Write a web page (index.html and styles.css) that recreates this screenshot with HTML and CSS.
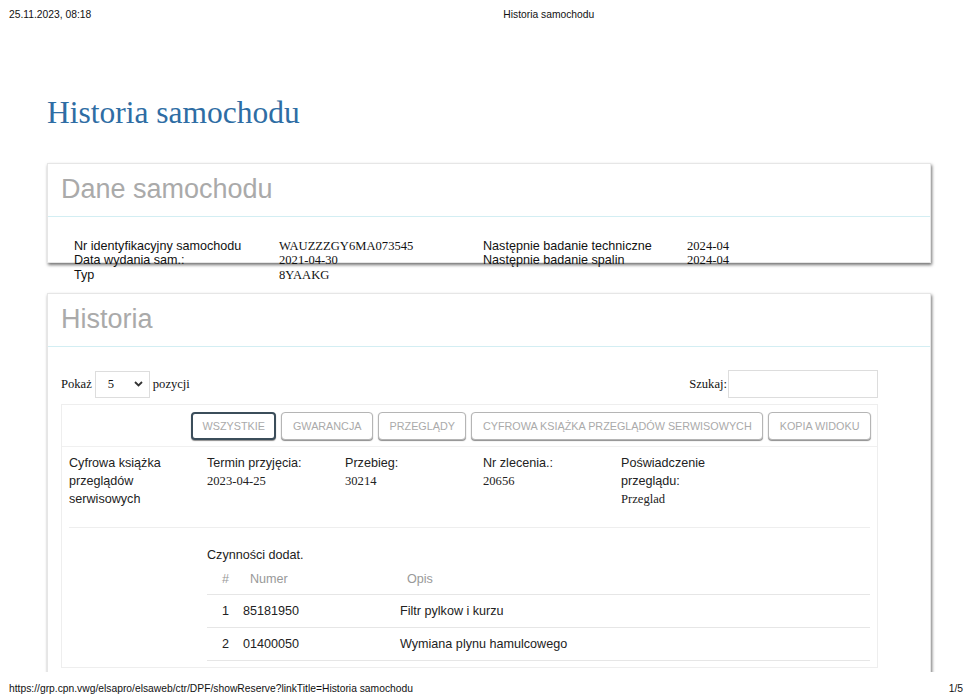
FILE: index.html
```html
<!DOCTYPE html>
<html lang="pl">
<head>
    <meta charset="UTF-8">
    <title>Historia samochodu</title>
    <link rel="stylesheet" href="styles.css">
</head>
<body>
    <header class="print-header">
        <span>25.11.2023, 08:18</span>
        <span class="print-title">Historia samochodu</span>
    </header>

    <main class="page">
        <h1 class="page-title">Historia samochodu</h1>

        <section class="panel panel-car">
            <div class="panel-heading">Dane samochodu</div>
            <div class="car-data">
                <span class="lbl">Nr identyfikacyjny samochodu</span>
                <span class="val">WAUZZZGY6MA073545</span>
                <span class="lbl">Następnie badanie techniczne</span>
                <span class="val">2024-04</span>

                <span class="lbl">Data wydania sam.:</span>
                <span class="val">2021-04-30</span>
                <span class="lbl">Następnie badanie spalin</span>
                <span class="val">2024-04</span>

                <span class="lbl">Typ</span>
                <span class="val">8YAAKG</span>
            </div>
        </section>

        <section class="panel panel-history">
            <div class="panel-heading">Historia</div>
            <div class="panel-body">
                <div class="controls">
                    <div class="length">
                        Pokaż
                        <div class="fake-select">
                            <span>5</span>
                            <svg width="9" height="6" viewBox="0 0 9 6"><path d="M1 1 L4.5 4.5 L8 1" fill="none" stroke="#333" stroke-width="1.8"/></svg>
                        </div>
                        pozycji
                    </div>
                    <label class="search">Szukaj:<input type="text"></label>
                </div>

                <div class="records">
                    <div class="filters">
                        <button class="btn active">Wszystkie</button>
                        <button class="btn">Gwarancja</button>
                        <button class="btn">Przeglądy</button>
                        <button class="btn">Cyfrowa książka przeglądów serwisowych</button>
                        <button class="btn">Kopia widoku</button>
                    </div>

                    <div class="record">
                        <div class="cell">Cyfrowa książka przeglądów serwisowych</div>
                        <div class="cell">Termin przyjęcia:<div class="val">2023-04-25</div></div>
                        <div class="cell">Przebieg:<div class="val">30214</div></div>
                        <div class="cell">Nr zlecenia.:<div class="val">20656</div></div>
                        <div class="cell">Poświadczenie przeglądu:<div class="val">Przeglad</div></div>
                    </div>

                    <div class="details">
                        <div class="details-title">Czynności dodat.</div>
                        <table class="ops">
                            <colgroup>
                                <col style="width: 29px">
                                <col style="width: 157px">
                                <col>
                            </colgroup>
                            <thead>
                                <tr><th>#</th><th>Numer</th><th>Opis</th></tr>
                            </thead>
                            <tbody>
                                <tr><td>1</td><td>85181950</td><td>Filtr pylkow i kurzu</td></tr>
                                <tr><td>2</td><td>01400050</td><td>Wymiana plynu hamulcowego</td></tr>
                            </tbody>
                        </table>
                    </div>
                </div>
            </div>
        </section>
    </main>

    <footer class="print-footer">
        <span>https://grp.cpn.vwg/elsapro/elsaweb/ctr/DPF/showReserve?linkTitle=Historia samochodu</span>
        <span>1/5</span>
    </footer>
</body>
</html>
```

FILE: styles.css
```css
* {
    box-sizing: border-box;
}

body {
    margin: 0;
    height: 698px;
    display: flex;
    flex-direction: column;
    overflow: hidden;
    background: #fff;
    color: #222;
    font-family: "Liberation Sans", Arial, sans-serif;
    font-size: 12.6px;
    line-height: 18px;
}

.print-header,
.print-footer {
    display: flex;
    font-size: 10.3px;
    line-height: 12px;
    color: #111;
    padding: 0 15px 0 9px;
}

.print-header {
    height: 30px;
    padding-top: 9px;
}

.print-title {
    margin-left: 412px;
}

.print-footer {
    height: 26px;
    padding-top: 11px;
    justify-content: space-between;
}

.page {
    flex: 1;
    overflow: hidden;
    padding: 0 47px;
}

.page-title {
    margin: 65px 0 32px;
    font-family: "Liberation Serif", "Times New Roman", serif;
    font-weight: normal;
    font-size: 31.5px;
    line-height: 36px;
    color: #2e6da4;
}

/* panels */
.panel {
    background: #fff;
    border: 1px solid #e6e6e6;
    box-shadow: 1px 2px 3px rgba(0, 0, 0, 0.55);
}

.panel-car {
    height: 100px;
}

.panel-history {
    margin-top: 30px;
}

.panel-heading {
    padding: 10px 13px 11px;
    border-bottom: 1px solid #d3eef3;
    font-size: 27px;
    line-height: 31px;
    color: #aaa;
}

.car-data {
    display: grid;
    grid-template-columns: 205px 204px 204px auto;
    padding: 21.5px 26px 0;
    line-height: 14.5px;
    color: #111;
}

.val {
    font-family: "Liberation Serif", "Times New Roman", serif;
}

.panel-body {
    padding: 23px 52px 40px 13px;
}

/* length + search */
.controls {
    display: flex;
    justify-content: space-between;
    align-items: center;
    font-family: "Liberation Serif", "Times New Roman", serif;
    color: #111;
}

.length {
    display: flex;
    align-items: center;
    gap: 3px;
}

.fake-select {
    display: flex;
    justify-content: space-between;
    align-items: center;
    width: 55px;
    height: 27px;
    padding: 0 6px 0 12px;
    border: 1px solid #ddd;
}

.search {
    display: flex;
    align-items: center;
}

.search input {
    width: 150px;
    height: 28px;
    margin-left: 1px;
    border: 1px solid #ddd;
}

/* records box */
.records {
    margin-top: 6px;
    border: 1px solid #eee;
    padding: 0 0 6px;
}

.filters {
    display: flex;
    justify-content: flex-end;
    gap: 5px;
    padding: 7px 6px 6px;
    border-bottom: 1px solid #f0f0f0;
}

.btn {
    height: 28px;
    padding: 0 10.5px;
    background: #fff;
    border: 1px solid #b5b5b5;
    border-radius: 4px;
    box-shadow: 0 1px 1px rgba(0, 0, 0, 0.45);
    font-family: "Liberation Sans", Arial, sans-serif;
    font-size: 10.8px;
    text-transform: uppercase;
    color: #aaa;
}

.btn.active {
    border: 2px solid #3b4d5a;
    padding: 0 9.5px;
}

.record {
    display: grid;
    grid-template-columns: repeat(5, 138px);
    margin: 0 7px;
    padding: 6.5px 0 19.5px;
    border-bottom: 1px solid #eee;
}

.cell {
    padding-right: 8px;
}

.details {
    margin: 0 7px 0 145px;
    padding-top: 17.5px;
}

.ops {
    width: 100%;
    border-collapse: collapse;
    table-layout: fixed;
}

.ops th {
    padding: 6px 7px 6px 14px;
    text-align: left;
    font-weight: normal;
    color: #999;
}

.ops td {
    padding: 7.2px 7px;
    border-top: 1px solid #e6e6e6;
    border-bottom: 1px solid #e6e6e6;
}

.ops th:first-child,
.ops td:first-child {
    padding-left: 15px;
    padding-right: 0;
}
```
